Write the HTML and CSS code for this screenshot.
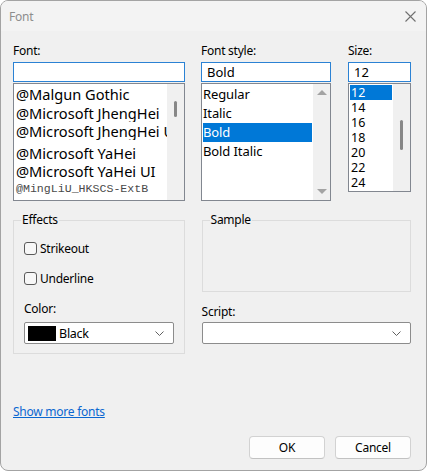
FILE: index.html
```html
<!DOCTYPE html>
<html>
<head>
<meta charset="utf-8">
<link rel="stylesheet" href="styles.css">
</head>
<body>
<div class="window">
  <div class="titlebar">
    <span class="title">Font</span>
    <svg class="close" width="11" height="11" viewBox="0 0 11 11"><path d="M0.5 0.5L10.5 10.5M10.5 0.5L0.5 10.5" stroke="#707070" stroke-width="1.1" fill="none"/></svg>
  </div>
  <div class="body">
    <div class="top">
      <div class="col col-font">
        <div class="lbl">Font:</div>
        <div class="input"></div>
        <div class="list list-font">
          <div class="items">
            <div class="fi r1">@Malgun Gothic</div>
            <div class="fi r2">@Microsoft JhengHei</div>
            <div class="fi r3">@Microsoft JhengHei UI</div>
            <div class="fi r4">@Microsoft YaHei</div>
            <div class="fi r5">@Microsoft YaHei UI</div>
            <div class="fi r6 mono">@MingLiU_HKSCS-ExtB</div>
          </div>
          <div class="vscroll"><div class="thumb thumb-font"></div></div>
        </div>
      </div>
      <div class="col col-style">
        <div class="lbl">Font style:</div>
        <div class="input"><span class="inval">Bold</span></div>
        <div class="list list-style">
          <div class="items items-style">
            <div class="si">Regular</div>
            <div class="si">Italic</div>
            <div class="si sel">Bold</div>
            <div class="si">Bold Italic</div>
          </div>
          <div class="vscroll arrows"><span class="up"></span><span class="down"></span></div>
        </div>
      </div>
      <div class="col col-size">
        <div class="lbl">Size:</div>
        <div class="input"><span class="inval">12</span></div>
        <div class="list list-size">
          <div class="items items-size">
            <div class="zi sel">12</div>
            <div class="zi">14</div>
            <div class="zi">16</div>
            <div class="zi">18</div>
            <div class="zi">20</div>
            <div class="zi">22</div>
            <div class="zi">24</div>
          </div>
          <div class="vscroll"><div class="thumb thumb-size"></div></div>
        </div>
      </div>
    </div>

    <div class="middle">
      <fieldset class="group effects">
        <legend>Effects</legend>
        <div class="effects-inner">
          <div class="chk"><span class="box"></span><span>Strikeout</span></div>
          <div class="chk chk2"><span class="box"></span><span>Underline</span></div>
          <div class="lbl lbl-color">Color:</div>
          <div class="combo"><span class="swatch"></span><span class="cval">Black</span><svg class="chev" width="9" height="5" viewBox="0 0 9 5"><path d="M0.5 0.5L4.5 4.5L8.5 0.5" stroke="#606060" fill="none"/></svg></div>
        </div>
      </fieldset>
      <div class="right">
        <fieldset class="group sample">
          <legend>Sample</legend>
          <div class="sample-inner"></div>
        </fieldset>
        <div class="lbl lbl-script">Script:</div>
        <div class="combo"><span class="cval"></span><svg class="chev" width="9" height="5" viewBox="0 0 9 5"><path d="M0.5 0.5L4.5 4.5L8.5 0.5" stroke="#606060" fill="none"/></svg></div>
      </div>
    </div>

    <a class="link" href="#">Show more fonts</a>

    <div class="buttons">
      <div class="btn">OK</div>
      <div class="btn">Cancel</div>
    </div>
  </div>
</div>
</body>
</html>
```

FILE: styles.css
```css
* { box-sizing: border-box; }
html, body { margin: 0; padding: 0; background: #ffffff; }
body { font-family: "Noto Sans", "Segoe UI", sans-serif; font-size: 12px; letter-spacing: -0.25px; color: #000; }

.window {
  width: 427px;
  height: 471px;
  border: 1px solid #a3a3a3;
  border-radius: 8px;
  background: #f0f0f0;
  overflow: hidden;
  display: flex;
  flex-direction: column;
}

.titlebar {
  height: 30px;
  background: #f3f3f3;
  display: flex;
  align-items: center;
  justify-content: space-between;
  padding: 0 10px 0 8px;
}
.title { color: #8d8d8d; font-size: 12px; }
.close { display: block; }

.body {
  flex: 1;
  padding: 12px 15px 11px 12px;
  display: flex;
  flex-direction: column;
}

.lbl { height: 16px; line-height: 16px; font-size: 12px; }

.top { display: flex; }
.col { display: flex; flex-direction: column; }
.col-font { width: 172px; }
.col-style { width: 130px; margin-left: 16px; }
.col-size { width: 63px; margin-left: 17px; }
.col .lbl { margin-bottom: 3px; }

.input {
  height: 20px;
  background: #fff;
  border: 1px solid #2b82d4;
  display: flex;
  align-items: center;
  padding-left: 5px;
}
.inval { font-size: 13px; line-height: 18px; letter-spacing: 0; }

.list {
  margin-top: 1px;
  background: #fff;
  border: 1px solid #828790;
  display: flex;
  overflow: hidden;
}
.list-font, .list-style { height: 118px; }
.list-size { height: 109px; }

.items { flex: 1; min-width: 0; overflow: hidden; padding-top: 1px; }

.vscroll {
  width: 17px;
  flex: none;
  background: #f0f0f0;
  display: flex;
  flex-direction: column;
}
.thumb { width: 3px; margin-left: 7px; background: #878787; border-radius: 2px; }
.thumb-font { margin-top: 17px; height: 16px; }
.thumb-size { margin-top: 36px; height: 30px; }

.arrows { justify-content: space-between; align-items: center; padding: 6px 0 6px 0; }
.up, .down { width: 0; height: 0; border-left: 5px solid transparent; border-right: 5px solid transparent; }
.up { border-bottom: 5px solid #a3a3a3; }
.down { border-top: 5px solid #a3a3a3; }

.fi {
  white-space: nowrap;
  padding-left: 2px;
  font-size: 14.6px;
  letter-spacing: 0;
  line-height: 18px;
  height: 18px;
  overflow: hidden;
}
.fi.r1 { height: 19px; line-height: 19px; }
.fi.r4 { height: 22px; padding-top: 4px; }
.fi.r5 { height: 19px; line-height: 19px; }
.fi.r6 { height: 16px; line-height: 16px; }
.mono { font-family: "Liberation Mono", monospace; font-size: 11.6px; color: #4a4a4a; }

.items-style { padding: 1px 1px 0 1px; }
.si { height: 19px; line-height: 19px; font-size: 13px; letter-spacing: -0.1px; white-space: nowrap; }
.sel { background: #0078d7; color: #fff; }

.items-size { padding: 1px 1px 0 1px; }
.zi { height: 15px; line-height: 15px; font-size: 12.5px; letter-spacing: 0; padding-left: 1px; overflow: hidden; }

.middle { display: flex; margin-top: 11px; }
.group {
  margin: 0;
  padding: 0;
  min-width: 0;
  border: 1px solid #dcdcdc;
}
.group legend {
  margin-left: 7px;
  padding: 0 1px;
  font-size: 12px;
  line-height: 16px;
}
.effects { width: 172px; }
.effects-inner { padding: 12px 10px 9px 10px; }

.chk { display: flex; align-items: center; height: 16px; gap: 3px; }
.chk2 { margin-top: 14px; }
.box {
  width: 13px;
  height: 13px;
  border: 1px solid #5a5a5a;
  border-radius: 3px;
  background: #f7f7f7;
  flex: none;
}
.lbl-color { margin-top: 15px; margin-bottom: 5px; }

.combo {
  height: 22px;
  background: #fff;
  border: 1px solid #8c8c8c;
  border-radius: 2px;
  display: flex;
  align-items: center;
  padding: 0 9px 0 3px;
}
.swatch { width: 28px; height: 15px; background: #000; flex: none; }
.cval { flex: 1; padding-left: 3px; font-size: 12.5px; }
.chev { display: block; flex: none; }

.right { width: 210px; margin-left: 17px; display: flex; flex-direction: column; }
.sample-inner { height: 63px; }
.lbl-script { margin-top: 12px; margin-bottom: 2px; }

.link {
  margin-top: 50px;
  align-self: flex-start;
  color: #0b67d0;
  font-size: 12px;
  line-height: 16px;
  text-decoration: underline;
}

.buttons { margin-top: 16px; display: flex; justify-content: flex-end; gap: 10px; }
.btn {
  width: 76px;
  height: 23px;
  background: #fdfdfd;
  border: 1px solid #d2d2d2;
  border-bottom-color: #c2c2c2;
  border-radius: 4px;
  display: flex;
  align-items: center;
  justify-content: center;
  font-size: 12px;
}
```
